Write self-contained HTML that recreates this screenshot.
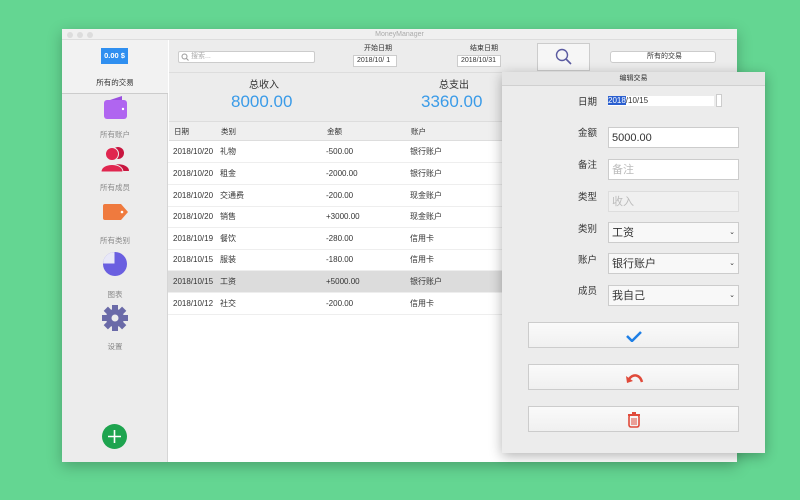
<!DOCTYPE html>
<html><head><meta charset="utf-8"><style>
*{margin:0;padding:0;box-sizing:border-box}
body{width:800px;height:500px;background:#64d692;font-family:"Liberation Sans","Noto Sans CJK SC",sans-serif;position:relative;overflow:hidden;font-size:8px;color:#333}
.a{position:absolute}
.win{left:62px;top:29px;width:675px;height:433px;background:#fff;box-shadow:0 4px 14px rgba(0,0,0,.25);overflow:hidden}
.tb{left:0;top:0;width:675px;height:11px;background:#f0f0f0;border-bottom:1px solid #ddd;text-align:center;font-size:7px;color:#aaa;line-height:11px}
.dot{top:3px;width:6px;height:6px;border-radius:50%;background:#dcdcdc}
.side{left:0;top:11px;width:106px;height:422px;background:#ececec;border-right:1px solid #d6d6d6}
.sl{width:106px;text-align:center;font-size:7.5px;color:#888}
.row{left:106px;width:569px;height:22px;border-bottom:1px solid #eee;font-size:8px;line-height:22px}
.row span{position:absolute}
.inp{background:#fff;border:1px solid #ccc;font-size:11px;line-height:20px;padding-left:3px}
.lab{width:60px;text-align:right;font-size:9.5px;color:#333}
.btn{left:26px;width:211px;height:26px;background:linear-gradient(#fafafa,#f0f0f0);border:1px solid #ccc}
</style></head><body>
<div class="a win">
 <div class="a tb">MoneyManager</div>
 <div class="a dot" style="left:5px"></div><div class="a dot" style="left:15px"></div><div class="a dot" style="left:25px"></div>
 <div class="a side">
  <div class="a" style="left:0;top:0;width:106px;height:54px;background:#f2f2f2;border-bottom:1px solid #ccc"></div>
  <div class="a" style="left:39px;top:8px;width:27px;height:16px;background:#2f8ff0;color:#fff;font-size:7.5px;font-weight:bold;text-align:center;line-height:16px">0.00 $</div>
  <div class="a sl" style="top:37px;color:#333">所有的交易</div>
  <svg class="a" style="left:42px;top:56px" width="24" height="24"><path d="M3 5l15-5v5z" fill="#9a4fe0"/><rect x="0" y="4" width="23" height="19" rx="3" fill="#b065f0"/><circle cx="19" cy="13" r="1.2" fill="#fff"/></svg>
  <div class="a sl" style="top:89px">所有账户</div>
  <svg class="a" style="left:39px;top:106px" width="29" height="26"><circle cx="17" cy="7" r="6" fill="#c8163f"/><path d="M6 25c0-9 22-9 22 0z" fill="#c8163f"/><circle cx="11" cy="8" r="6.5" fill="#e0264f" stroke="#ececec"/><path d="M0 26c0-10 22-10 22 0z" fill="#e0264f" stroke="#ececec"/></svg>
  <div class="a sl" style="top:142px">所有成员</div>
  <svg class="a" style="left:41px;top:164px" width="25" height="16"><path d="M2 0h16l7 8-7 8H2a2 2 0 0 1-2-2V2a2 2 0 0 1 2-2z" fill="#ef7a3e"/><circle cx="19" cy="8" r="1.3" fill="#fff"/></svg>
  <div class="a sl" style="top:195px">所有类别</div>
  <svg class="a" style="left:40px;top:211px" width="26" height="26"><circle cx="13" cy="13" r="12" fill="#6a5fe0"/><path d="M13 13V1A12 12 0 0 0 1 13z" fill="#e8e8f8"/><path d="M13 13V1M13 13H1" stroke="#6a5fe0"/></svg>
  <div class="a sl" style="top:249px">图表</div>
  <svg class="a" style="left:40px;top:265px" width="26" height="26" viewBox="-13 -13 26 26"><g fill="#6a6aa8"><circle r="9"/><g id="t"><rect x="-3" y="-13" width="6" height="6"/></g><use href="#t" transform="rotate(45)"/><use href="#t" transform="rotate(90)"/><use href="#t" transform="rotate(135)"/><use href="#t" transform="rotate(180)"/><use href="#t" transform="rotate(225)"/><use href="#t" transform="rotate(270)"/><use href="#t" transform="rotate(315)"/></g><circle r="3.5" fill="#ececec"/></svg>
  <div class="a sl" style="top:301px">设置</div>
  <div class="a" style="left:40px;top:384px;width:25px;height:25px;border-radius:50%;background:#1ea44f"></div>
  <svg class="a" style="left:40px;top:384px" width="25" height="25"><path d="M12.5 6v13M6 12.5h13" stroke="#fff" stroke-width="1.6"/></svg>
 </div>
 <div class="a" style="left:107px;top:11px;width:568px;height:82px;background:#ececec;border-bottom:1px solid #ddd"></div>
 <div class="a inp" style="left:116px;top:22px;width:137px;height:12px;font-size:7px;line-height:10px;color:#aaa;border-radius:2px;padding-left:12px">搜索...</div>
 <svg class="a" style="left:119px;top:24px" width="8" height="8"><circle cx="3.5" cy="3.5" r="2.5" fill="none" stroke="#999"/><path d="M5.5 5.5l2 2" stroke="#999"/></svg>
 <div class="a" style="left:302px;top:14px;font-size:7px">开始日期</div>
 <div class="a inp" style="left:291px;top:26px;width:44px;height:12px;font-size:7px;line-height:10px">2018/10/ 1</div>
 <div class="a" style="left:408px;top:14px;font-size:7px">结束日期</div>
 <div class="a inp" style="left:395px;top:26px;width:44px;height:12px;font-size:7px;line-height:10px">2018/10/31</div>
 <div class="a" style="left:475px;top:14px;width:53px;height:28px;background:#f6f6f6;border:1px solid #ccc"></div>
 <svg class="a" style="left:493px;top:19px" width="18" height="18"><circle cx="7" cy="7" r="5.5" fill="none" stroke="#5a5aa0" stroke-width="1.4"/><path d="M11 11l5 5" stroke="#5a5aa0" stroke-width="1.6"/></svg>
 <div class="a inp" style="left:548px;top:22px;width:106px;height:12px;font-size:7px;line-height:10px;text-align:center;border-radius:3px">所有的交易</div>
 <div class="a" style="left:107px;top:43px;width:568px;height:1px;background:#ddd"></div>
 <div class="a" style="left:187px;top:47px;font-size:10px">总收入</div>
 <div class="a" style="left:169px;top:63px;font-size:17px;color:#3a9be8">8000.00</div>
 <div class="a" style="left:377px;top:47px;font-size:10px">总支出</div>
 <div class="a" style="left:359px;top:63px;font-size:17px;color:#3a9be8">3360.00</div>
 <div class="a" style="left:107px;top:93px;width:568px;height:19px;background:#efefef;border-bottom:1px solid #ddd;font-size:7.5px;line-height:19px">
  <span class="a" style="left:5px">日期</span><span class="a" style="left:52px">类别</span><span class="a" style="left:158px">金额</span><span class="a" style="left:242px">账户</span></div>
 <div class="a row" style="top:112px"><span style="left:5px">2018/10/20</span><span style="left:52px">礼物</span><span style="left:158px">-500.00</span><span style="left:242px">银行账户</span></div>
 <div class="a row" style="top:134px"><span style="left:5px">2018/10/20</span><span style="left:52px">租金</span><span style="left:158px">-2000.00</span><span style="left:242px">银行账户</span></div>
 <div class="a row" style="top:156px"><span style="left:5px">2018/10/20</span><span style="left:52px">交通费</span><span style="left:158px">-200.00</span><span style="left:242px">现金账户</span></div>
 <div class="a row" style="top:177px"><span style="left:5px">2018/10/20</span><span style="left:52px">销售</span><span style="left:158px">+3000.00</span><span style="left:242px">现金账户</span></div>
 <div class="a row" style="top:199px"><span style="left:5px">2018/10/19</span><span style="left:52px">餐饮</span><span style="left:158px">-280.00</span><span style="left:242px">信用卡</span></div>
 <div class="a row" style="top:220px"><span style="left:5px">2018/10/15</span><span style="left:52px">服装</span><span style="left:158px">-180.00</span><span style="left:242px">信用卡</span></div>
 <div class="a row" style="top:242px;background:#dcdcdc"><span style="left:5px">2018/10/15</span><span style="left:52px">工资</span><span style="left:158px">+5000.00</span><span style="left:242px">银行账户</span></div>
 <div class="a row" style="top:264px"><span style="left:5px">2018/10/12</span><span style="left:52px">社交</span><span style="left:158px">-200.00</span><span style="left:242px">信用卡</span></div>
</div>
<div class="a" style="left:502px;top:72px;width:263px;height:381px;background:#ececec;box-shadow:0 3px 12px rgba(0,0,0,.3)">
 <div class="a" style="left:0;top:0;width:263px;height:14px;background:#e4e4e4;border-bottom:1px solid #d0d0d0;text-align:center;font-size:7px;line-height:14px">编辑交易</div>
 <div class="a lab" style="left:35px;top:22px">日期</div>
 <div class="a" style="left:106px;top:24px;width:106px;height:10px;background:#fff;font-size:8px;line-height:10px"><span style="background:#2a5fd0;color:#fff">2018</span>/10/15</div>
 <div class="a inp" style="left:214px;top:22px;width:6px;height:13px;font-size:0"></div>
 <div class="a lab" style="left:35px;top:53px">金额</div>
 <div class="a inp" style="left:106px;top:55px;width:131px;height:21px">5000.00</div>
 <div class="a lab" style="left:35px;top:85px">备注</div>
 <div class="a inp" style="left:106px;top:87px;width:131px;height:21px;color:#bbb">备注</div>
 <div class="a lab" style="left:35px;top:117px">类型</div>
 <div class="a inp" style="left:106px;top:119px;width:131px;height:21px;color:#bbb;background:#f0f0f0;border-color:#ddd">收入</div>
 <div class="a lab" style="left:35px;top:149px">类别</div>
 <div class="a inp" style="left:106px;top:150px;width:131px;height:21px;background:#f8f8f8">工资<span style="position:absolute;right:3px;font-size:7px">⌄</span></div>
 <div class="a lab" style="left:35px;top:180px">账户</div>
 <div class="a inp" style="left:106px;top:181px;width:131px;height:21px;background:#f8f8f8">银行账户<span style="position:absolute;right:3px;font-size:7px">⌄</span></div>
 <div class="a lab" style="left:35px;top:211px">成员</div>
 <div class="a inp" style="left:106px;top:213px;width:131px;height:21px;background:#f8f8f8">我自己<span style="position:absolute;right:3px;font-size:7px">⌄</span></div>
 <div class="a btn" style="top:250px"><svg class="a" style="left:96px;top:7px" width="18" height="12"><path d="M2 6l5 5 9-9" stroke="#1e7fe6" stroke-width="2.5" fill="none"/></svg></div>
 <div class="a btn" style="top:292px"><svg class="a" style="left:96px;top:7px" width="20" height="12"><path d="M4 7c5-6 11-4 13 3" stroke="#e04a3a" stroke-width="2.5" fill="none"/><path d="M1 4l1 7 6-2z" fill="#e04a3a"/></svg></div>
 <div class="a btn" style="top:334px"><svg class="a" style="left:98px;top:5px" width="14" height="16"><rect x="2" y="3" width="10" height="12" rx="2" fill="none" stroke="#e04a3a" stroke-width="1.6"/><rect x="1" y="2" width="12" height="2" fill="#e04a3a"/><rect x="5" y="0" width="4" height="2" fill="#e04a3a"/><path d="M5 6v7M7 6v7M9 6v7" stroke="#e04a3a"/></svg></div>
</div>
</body></html>
